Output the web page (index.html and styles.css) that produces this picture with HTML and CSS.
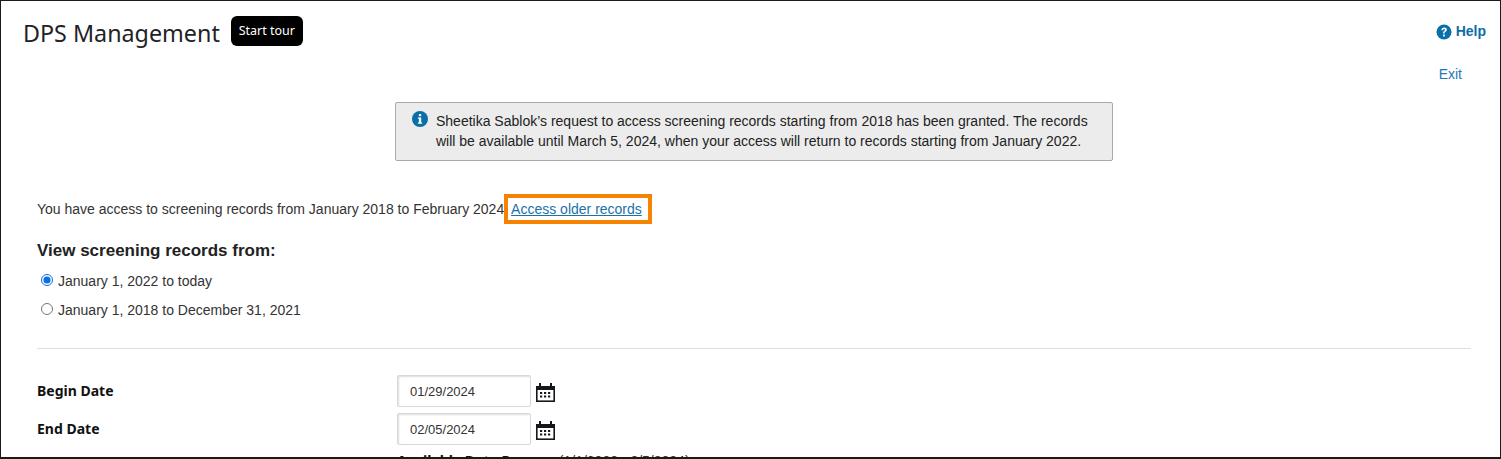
FILE: index.html
```html
<!DOCTYPE html>
<html lang="en">
<head>
<meta charset="utf-8">
<title>DPS Management</title>
<link rel="stylesheet" href="styles.css">
</head>
<body>
<div class="frame">
  <header class="top">
    <div class="title-group">
      <h1 class="title">DPS Management</h1>
      <button class="tour" type="button">Start tour</button>
    </div>
    <div class="top-links">
      <a class="help" href="#">
        <svg class="help-icon" viewBox="0 0 16 16" aria-hidden="true"><circle cx="8" cy="8" r="7.5" fill="#0a6ea8"/><path d="M5.400 6.200c.1-1.600 1.200-2.600 2.800-2.600 1.500 0 2.600.9 2.600 2.200 0 1-.5 1.500-1.300 2-.7.5-.9.7-.9 1.400v.3H7.100v-.5c0-1 .4-1.500 1.100-2 .6-.4.8-.7.8-1.100 0-.5-.4-.8-.9-.8-.6 0-1 .4-1 1.100z M7.100 10.600h1.700v1.800H7.100z" fill="#fff"/></svg>
        Help
      </a>
      <a class="exit" href="#">Exit</a>
    </div>
  </header>

  <div class="notice-row">
    <div class="notice">
      <svg class="info-icon" viewBox="0 0 16 16" aria-hidden="true"><circle cx="8" cy="8" r="8" fill="#0a6ea8"/><rect x="6.900" y="3" width="2.300" height="2.200" fill="#fff"/><path d="M5.900 6.500h3.300v5h1v1.300H5.900v-1.300h1v-3.700h-1z" fill="#fff"/></svg>
      <p class="notice-text">Sheetika Sablok’s request to access screening records starting from 2018 has been granted. The records will be available until March 5, 2024, when your access will return to records starting from January 2022.</p>
    </div>
  </div>

  <main class="content">
    <p class="access">You have access to screening records from January 2018 to February 2024 <a class="older" href="#">Access older records</a></p>

    <h2 class="view-title">View screening records from:</h2>
    <label class="radio-row"><input type="radio" name="range" class="radio" checked> January 1, 2022 to today</label>
    <label class="radio-row"><input type="radio" name="range" class="radio"> January 1, 2018 to December 31, 2021</label>

    <hr class="rule">

    <div class="date-row">
      <span class="date-label">Begin Date</span>
      <input class="date-input" type="text" value="01/29/2024">
      <svg class="cal" viewBox="0 0 19 19" aria-hidden="true"><path d="M0 3h3V0h2v3h9V0h2v3h3v16H0z" fill="#14181c"/><rect x="1.600" y="7" width="15.800" height="10.400" fill="#fff"/><path d="M4 9h2.200v2H4zM8 9h2.200v2H8zM12 9h2.200v2H12zM4 12.600h2.200v2H4zM8 12.600h2.200v2H8zM12 12.600h2.200v2H12z" fill="#14181c"/></svg>
    </div>
    <div class="date-row">
      <span class="date-label">End Date</span>
      <input class="date-input" type="text" value="02/05/2024">
      <svg class="cal" viewBox="0 0 19 19" aria-hidden="true"><path d="M0 3h3V0h2v3h9V0h2v3h3v16H0z" fill="#14181c"/><rect x="1.600" y="7" width="15.800" height="10.400" fill="#fff"/><path d="M4 9h2.200v2H4zM8 9h2.200v2H8zM12 9h2.200v2H12zM4 12.600h2.200v2H4zM8 12.600h2.200v2H8zM12 12.600h2.200v2H12z" fill="#14181c"/></svg>
    </div>
    <div class="range-row"><strong class="range-label">Available Date Range:</strong> <span class="range-value">(1/1/2022 - 2/5/2024)</span></div>
  </main>
</div>
</body>
</html>
```
FILE: styles.css
```css
* { box-sizing: border-box; }
html, body { margin: 0; padding: 0; background: #fff; }
body { font-family: "Liberation Sans", Arial, sans-serif; color: #222; }
.frame {
  width: 1501px;
  height: 459px;
  border: 1px solid #1c1c14;
  border-bottom-width: 2px;
  overflow: hidden;
  background: #fff;
}
.top {
  display: flex;
  justify-content: space-between;
  align-items: flex-start;
  padding: 14px 14px 0 22px;
  height: 101px;
}
.title-group { display: flex; align-items: flex-start; gap: 11px; }
.title {
  margin: 0;
  font: 400 23.300px/36px "Noto Sans", sans-serif;
  color: #1f2328;
}
.tour {
  margin: 1px 0 0;
  height: 30px;
  width: 72px;
  padding: 0;
  background: #000;
  color: #fff;
  border: 0;
  border-radius: 6px;
  font: 400 12.500px/28px "Noto Sans", sans-serif;
}
.top-links { display: flex; flex-direction: column; align-items: flex-end; }
.help {
  display: flex;
  align-items: center;
  gap: 4px;
  margin-top: 1px;
  font-weight: 700;
  font-size: 14px;
  line-height: 30px;
  color: #0a6ea8;
  text-decoration: none;
}
.help-icon { width: 16px; height: 16px; margin-top: 1px; }
.exit {
  margin: 20px 24px 0 0;
  font-size: 14px;
  line-height: 16px;
  color: #1f7ab5;
  text-decoration: none;
}
.notice-row { display: flex; padding-left: 394px; }
.notice {
  display: flex;
  align-items: flex-start;
  gap: 8px;
  width: 718px;
  height: 59px;
  padding: 8px 12px 0 16px;
  background: #ececec;
  border: 1px solid #a9a9a9;
  border-radius: 2px;
}
.info-icon { width: 16px; height: 16px; flex: none; }
.notice-text { margin: 0; font-size: 14px; line-height: 20px; color: #222; }
.content { padding: 0 29px 0 36px; }
.access { margin: 36px 0 0; font-size: 14px; line-height: 20px; color: #333; }
.older {
  display: inline-block;
  padding: 0 7px 0 4px;
  margin-left: -1px;
  line-height: 24px;
  color: #1a73a8;
  outline: 4px solid #f58200;
  outline-offset: -1px;
}
.view-title {
  margin: 18px 0 0;
  font-size: 17px;
  line-height: 23px;
  font-weight: 700;
  color: #222;
}
.radio-row {
  display: flex;
  align-items: center;
  gap: 5px;
  margin-top: 8px;
  height: 21px;
  font-size: 14px;
  color: #333;
}
.radio-row + .radio-row { margin-top: 8px; }
.radio { width: 12px; height: 12px; margin: -2px 0 0 4px; accent-color: #0a6ee6; }
.rule { margin: 28px 0 26px; border: 0; border-top: 1px solid #dedede; }
.date-row { display: flex; align-items: center; height: 32px; margin-bottom: 6px; }
.date-label {
  width: 360px;
  font: 700 14px/20px "Noto Sans", sans-serif;
  color: #111;
}
.date-input {
  width: 134px;
  height: 32px;
  padding: 0 12px;
  font: 13px "Liberation Sans", Arial, sans-serif;
  color: #333;
  background: #fff;
  border: 1px solid #d8d8d8;
  border-radius: 2px;
  box-shadow: inset 1px 1px 2px #ddd;
}
.cal { width: 19px; height: 19px; margin: 3px 0 0 5px; }
.range-row { padding-left: 360px; margin-top: 0; line-height: 20px; }
.range-label { font: 700 14px/20px "Noto Sans", sans-serif; color: #111; }
.range-value { font-size: 14px; color: #333; margin-left: 5px; }
```
